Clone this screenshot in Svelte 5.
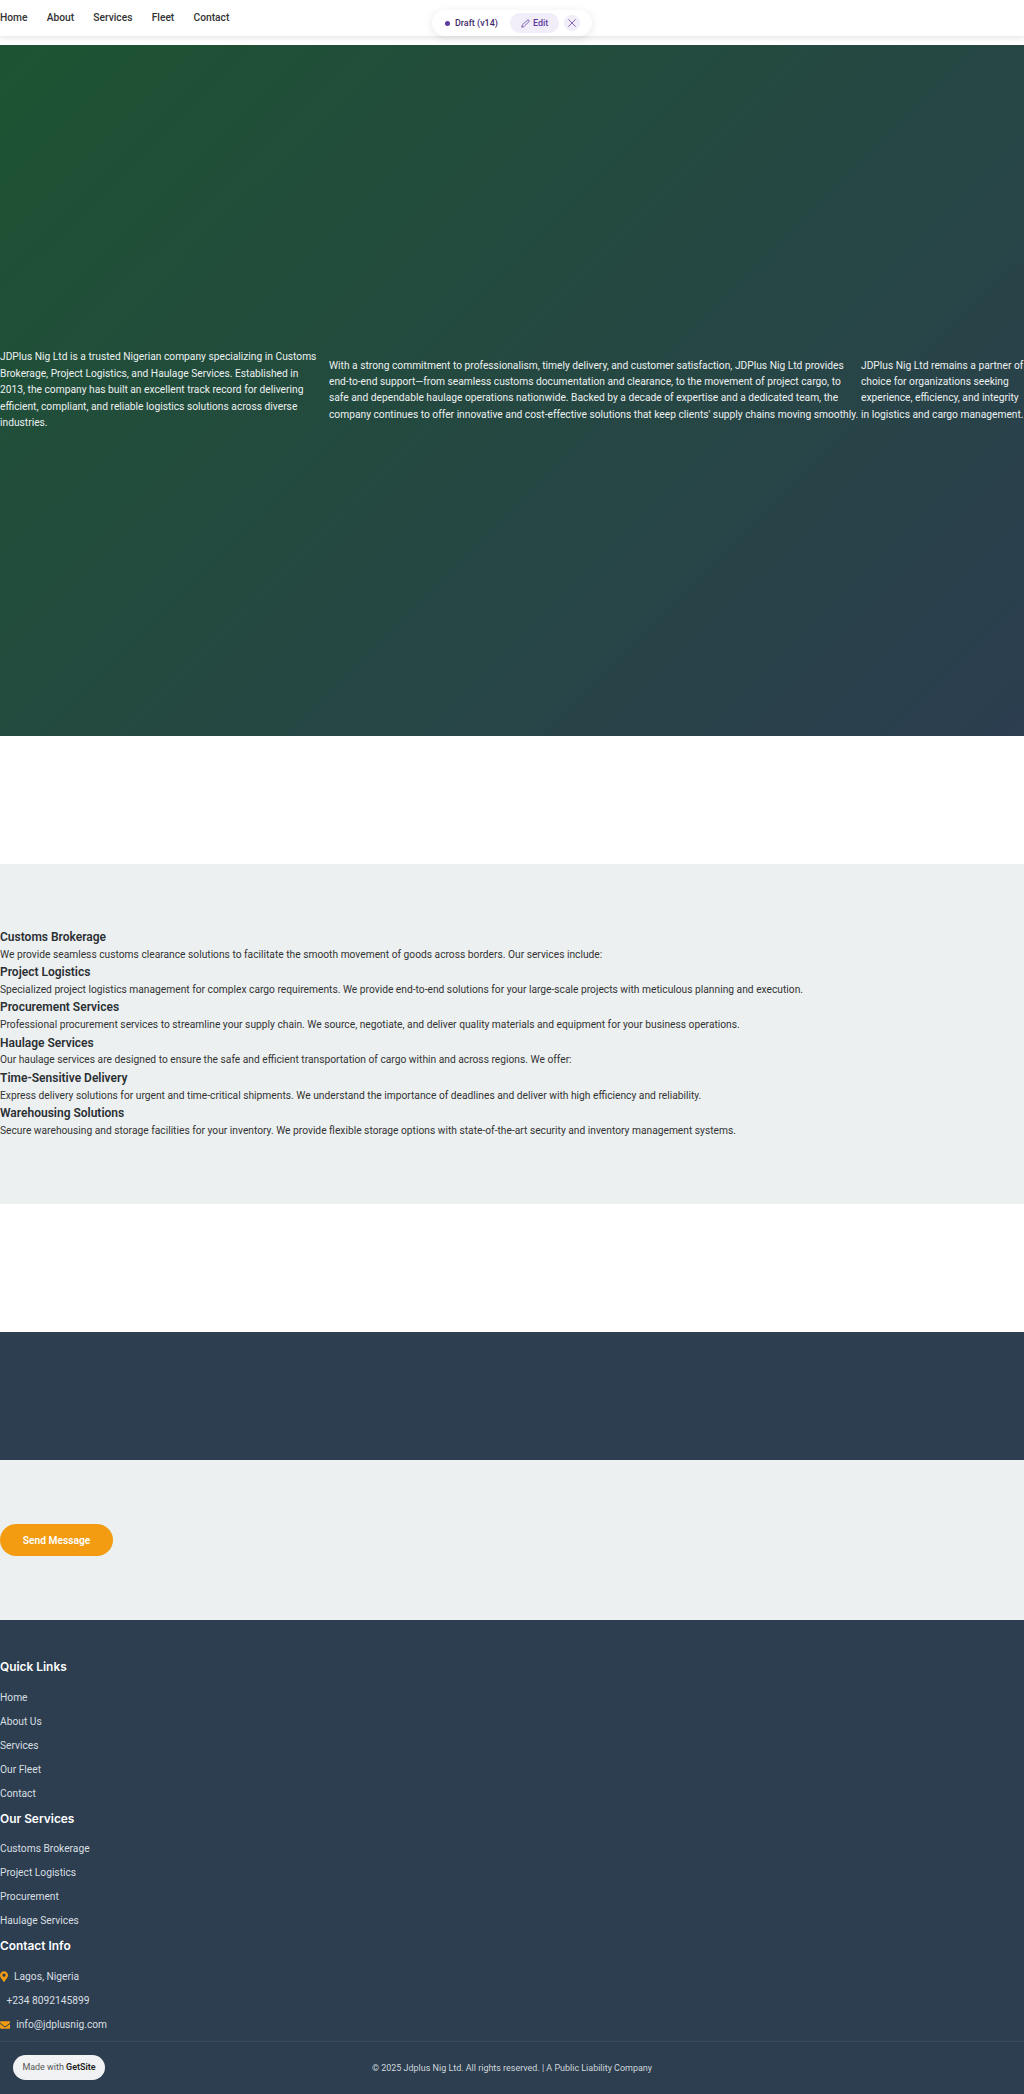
<script>
  const navLinks = ['Home', 'About', 'Services', 'Fleet', 'Contact'];
  const services = [
    ['Customs Brokerage', 'We provide seamless customs clearance solutions to facilitate the smooth movement of goods across borders. Our services include:'],
    ['Project Logistics', 'Specialized project logistics management for complex cargo requirements. We provide end-to-end solutions for your large-scale projects with meticulous planning and execution.'],
    ['Procurement Services', 'Professional procurement services to streamline your supply chain. We source, negotiate, and deliver quality materials and equipment for your business operations.'],
    ['Haulage Services', 'Our haulage services are designed to ensure the safe and efficient transportation of cargo within and across regions. We offer:'],
    ['Time-Sensitive Delivery', 'Express delivery solutions for urgent and time-critical shipments. We understand the importance of deadlines and deliver with high efficiency and reliability.'],
    ['Warehousing Solutions', 'Secure warehousing and storage facilities for your inventory. We provide flexible storage options with state-of-the-art security and inventory management systems.']
  ];
  const quickLinks = ['Home', 'About Us', 'Services', 'Our Fleet', 'Contact'];
  const serviceLinks = ['Customs Brokerage', 'Project Logistics', 'Procurement', 'Haulage Services'];
</script>

<nav class="nav">
  {#each navLinks as link}
    <a href="#top" class="nav-link">{link}</a>
  {/each}
</nav>

<div class="draft-bar">
  <span class="dot"></span>
  <span class="draft-label">Draft (v14)</span>
  <span class="edit-btn">
    <svg width="9" height="9" viewBox="0 0 24 24" fill="none" stroke="currentColor" stroke-width="2" stroke-linecap="round" stroke-linejoin="round">
      <path d="M17 3a2.8 2.8 0 0 1 4 4L7.5 20.5 2 22l1.5-5.5z" />
    </svg>
    Edit
  </span>
  <span class="close-btn">
    <svg width="10" height="10" viewBox="0 0 24 24" fill="none" stroke="currentColor" stroke-width="1.8" stroke-linecap="round">
      <path d="M4 4l16 16M20 4L4 20" />
    </svg>
  </span>
</div>

<section class="hero">
  <p class="hero-first">JDPlus Nig Ltd is a trusted Nigerian company specializing in Customs Brokerage, Project Logistics, and Haulage Services. Established in 2013, the company has built an excellent track record for delivering efficient, compliant, and reliable logistics solutions across diverse industries.</p>
  <p>With a strong commitment to professionalism, timely delivery, and customer satisfaction, JDPlus Nig Ltd provides end-to-end support—from seamless customs documentation and clearance, to the movement of project cargo, to safe and dependable haulage operations nationwide. Backed by a decade of expertise and a dedicated team, the company continues to offer innovative and cost-effective solutions that keep clients' supply chains moving smoothly.</p>
  <p>JDPlus Nig Ltd remains a partner of choice for organizations seeking experience, efficiency, and integrity in logistics and cargo management.</p>
</section>

<section class="services">
  {#each services as [title, text]}
    <h3>{title}</h3>
    <p>{text}</p>
  {/each}
</section>

<section class="dark-band"></section>

<section class="contact">
  <button class="send">Send Message</button>
</section>

<footer class="footer">
  <div class="footer-cols">
    <h4>Quick Links</h4>
    <ul>
      {#each quickLinks as link}
        <li>{link}</li>
      {/each}
    </ul>
    <h4>Our Services</h4>
    <ul>
      {#each serviceLinks as link}
        <li>{link}</li>
      {/each}
    </ul>
    <h4>Contact Info</h4>
    <ul>
      <li class="contact-row">
        <svg width="8" height="11" viewBox="0 0 384 512" fill="#f39c12"><path d="M172 502C27 291 0 269 0 192 0 86 86 0 192 0s192 86 192 192c0 77-27 99-172 310a24 24 0 0 1-40 0zm20-230a80 80 0 1 0 0-160 80 80 0 0 0 0 160z" /></svg>
        Lagos, Nigeria
      </li>
      <li class="contact-row phone">+234 8092145899</li>
      <li class="contact-row">
        <svg width="10.24" height="8" viewBox="0 0 512 384" fill="#f39c12"><path d="M48 0h416a48 48 0 0 1 29 86L275 250a32 32 0 0 1-38 0L19 86A48 48 0 0 1 48 0zM0 134l218 164a64 64 0 0 0 76 0l218-164v186a64 64 0 0 1-64 64H64a64 64 0 0 1-64-64z" /></svg>
        info@jdplusnig.com
      </li>
    </ul>
  </div>
  <div class="footer-bottom">
    <span class="made-with">Made with <b>GetSite</b></span>
    <span class="copyright">© 2025 Jdplus Nig Ltd. All rights reserved. | A Public Liability Company</span>
  </div>
</footer>

<style>
  :global(body) {
    font-family: Roboto, sans-serif;
    background: #fff;
    position: relative;
  }

  .nav {
    display: flex;
    gap: 19.2px;
    height: 36px;
    padding-top: 10px;
    box-sizing: border-box;
    margin-bottom: 8.8px;
    background: #fff;
    box-shadow: 0 2px 6px rgba(0, 0, 0, 0.1);
  }

  .nav-link {
    font-size: 10.24px;
    font-weight: 500;
    line-height: 16.38px;
    color: #333;
    text-decoration: none;
  }

  .draft-bar {
    position: absolute;
    top: 10px;
    left: 432px;
    width: 160px;
    height: 26px;
    box-sizing: border-box;
    padding: 0 13px;
    display: flex;
    align-items: center;
    background: #fff;
    border-radius: 13px;
    box-shadow: 0 2px 10px rgba(0, 0, 0, 0.1);
    font-size: 8.96px;
    font-weight: 500;
    color: #3f2a6e;
  }

  .dot {
    width: 5px;
    height: 5px;
    flex: none;
    border-radius: 50%;
    background: #5e3a9e;
    margin-right: 5px;
  }

  .draft-label {
    margin-right: 12px;
    white-space: nowrap;
  }

  .edit-btn {
    display: flex;
    align-items: center;
    flex: none;
    gap: 3px;
    height: 20px;
    padding: 0 11px;
    border-radius: 10px;
    background: #f1edf9;
    color: #5e3a9e;
    margin-right: 5px;
  }

  .close-btn {
    display: flex;
    align-items: center;
    justify-content: center;
    flex: none;
    width: 16px;
    height: 16px;
    border-radius: 50%;
    background: #f1edf9;
    color: #5e3a9e;
  }

  .hero {
    height: 691.2px;
    display: grid;
    grid-template-columns: 329px 532px 163px;
    align-items: center;
    background: linear-gradient(135deg, #1d5332, #2c3e50);
    color: #ecf0f1;
  }

  .hero p {
    margin: 0;
    font-size: 10.24px;
    line-height: 16.38px;
  }

  .hero .hero-first {
    padding-right: 9px;
  }

  .services {
    margin-top: 128px;
    padding: 64px 0 64.8px;
    background: #ecf0f1;
  }

  .services h3 {
    margin: 0;
    font-size: 12px;
    font-weight: 600;
    line-height: 18.84px;
    color: #2b2f33;
  }

  .services p {
    margin: 0;
    font-size: 10.24px;
    line-height: 16.38px;
    color: #333;
  }

  .dark-band {
    margin-top: 128px;
    height: 128px;
    background: #2c3e50;
  }

  .contact {
    height: 160px;
    box-sizing: border-box;
    padding-top: 64px;
    background: #ecf0f1;
  }

  .send {
    display: block;
    width: 113px;
    height: 32px;
    padding: 0;
    border: 0;
    border-radius: 16px;
    background: #f39c12;
    color: #fff;
    font-family: inherit;
    font-size: 10.24px;
    font-weight: 600;
  }

  .footer {
    box-sizing: border-box;
    padding-top: 38.4px;
    background: #2c3e50;
    color: #ecf0f1;
  }

  .footer h4 {
    margin: 0 0 12.8px;
    font-family: Inter, sans-serif;
    font-size: 11.9px;
    font-weight: 600;
    line-height: 18.43px;
    color: #fff;
  }

  .footer ul {
    list-style: none;
    margin: 0;
    padding: 0;
  }

  .footer li {
    margin-bottom: 7.68px;
    font-size: 10.24px;
    line-height: 16.38px;
    color: #d9dfe2;
  }

  .contact-row {
    display: flex;
    align-items: center;
    gap: 6px;
  }

  .phone {
    padding-left: 6.4px;
  }

  .footer-bottom {
    display: flex;
    align-items: center;
    box-sizing: border-box;
    height: 53px;
    padding-left: 13px;
    border-top: 1px solid #3a4b5d;
    position: relative;
  }

  .made-with {
    display: inline-block;
    width: 92px;
    height: 25px;
    line-height: 25px;
    text-align: center;
    border-radius: 13px;
    background: #f0f2f3;
    color: #555;
    font-size: 8.96px;
  }

  .made-with b {
    color: #222;
    font-weight: 600;
  }

  .copyright {
    position: absolute;
    left: 372px;
    font-size: 8.96px;
    color: #cfd6da;
  }
</style>
